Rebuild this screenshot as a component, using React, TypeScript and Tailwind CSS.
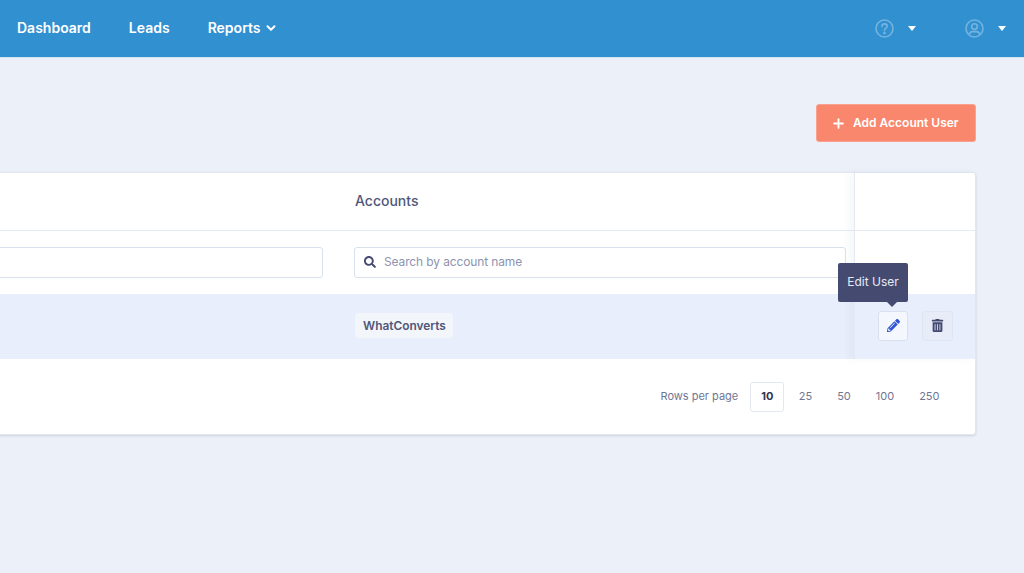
import { ChevronDown, Plus } from 'lucide-react'
import { FaPencilAlt, FaTrashAlt, FaSearch } from 'react-icons/fa'

const rowOptions = ['25', '50', '100', '250']

function Caret() {
  return <span className="h-0 w-0 border-x-[4px] border-t-[5px] border-x-transparent border-t-white" />
}

function HelpIcon() {
  return (
    <svg width="19" height="19" viewBox="0 0 19 19" fill="none" stroke="#74b3e0" strokeWidth="1.6">
      <circle cx="9.5" cy="9.5" r="8.5" />
      <path d="M6.9 7.4c0-1.5 1.2-2.5 2.7-2.5s2.6 1 2.6 2.3c0 2-2.7 2-2.7 4" strokeLinecap="round" />
      <circle cx="9.5" cy="14" r="0.6" fill="#74b3e0" />
    </svg>
  )
}

function UserIcon() {
  return (
    <svg width="19" height="19" viewBox="0 0 19 19" fill="none" stroke="#74b3e0" strokeWidth="1.6">
      <circle cx="9.5" cy="9.5" r="8.5" />
      <circle cx="9.5" cy="7.6" r="2.8" />
      <path d="M4.2 15.6c.5-2 1.8-3 3.3-3h4c1.5 0 2.800 1 3.300 3" />
    </svg>
  )
}

function Navbar() {
  return (
    <header className="flex h-[58px] shrink-0 items-center justify-between border-b border-[#d5e2ef] bg-[#3190d0] pl-[17px] pr-[18px]">
      <nav className="mb-[2px] flex items-center gap-[38px] text-[14px] font-semibold text-white">
        <span>Dashboard</span>
        <span>Leads</span>
        <span className="flex items-center gap-[4px]">
          Reports
          <ChevronDown className="mt-[1px] h-[14px] w-[14px]" strokeWidth={3.4} />
        </span>
      </nav>
      <div className="mb-[1px] flex items-center">
        <HelpIcon />
        <span className="ml-[14px] flex"><Caret /></span>
        <span className="ml-[49px] flex"><UserIcon /></span>
        <span className="ml-[14px] flex"><Caret /></span>
      </div>
    </header>
  )
}

function SearchBox({ placeholder }: { placeholder?: string }) {
  return (
    <div className="flex h-[31px] items-center rounded-[3px] border border-[#d9e0ee] bg-white pb-[1px] pl-[9px] text-[12px] tracking-[-0.13px] text-[#8d94b0]">
      {placeholder && (
        <>
          <FaSearch className="h-[12px] w-[12px] text-[#454b70]" />
          <span className="ml-[8px]">{placeholder}</span>
        </>
      )}
    </div>
  )
}

function UsersTable() {
  return (
    <div className="-ml-[20px] mt-[30px] flex h-[263px] w-[996px] flex-col rounded-[3px] border border-[#e1e6f0] bg-white shadow-sm">
      <div className="flex">
        <div className="flex min-w-0 flex-1 flex-col">
          <div className="flex h-[58px] items-center border-b border-[#e6eaf3] pb-[3px] pl-[374px]">
            <div className="text-[14px] font-medium text-[#50567a]">Accounts</div>
          </div>
          <div className="flex h-[63px] items-center pr-[8px]">
            <div className="w-[342px]"><SearchBox /></div>
            <div className="ml-[31px] flex-1"><SearchBox placeholder="Search by account name" /></div>
          </div>
          <div className="flex h-[65px] items-center bg-[#e8eefb] pb-[2px] pl-[374px]">
            <span className="rounded-[3px] bg-[#f2f5f9] py-[4px] pl-[8px] pr-[7px] text-[11.9px] font-semibold text-[#50567a]">WhatConverts</span>
          </div>
        </div>
        <div className="relative flex w-[121px] shrink-0 flex-col border-l border-[#e6e9f2] shadow-[-5px_0_7px_rgba(80,90,130,0.05)]">
          <div className="h-[58px] border-b border-[#e6eaf3]" />
          <div className="h-[63px]" />
          <div className="flex h-[65px] items-center gap-[14px] bg-[#e8eefb] pb-[2px] pl-[23px]">
            <div className="relative flex h-[30px] w-[30px] items-center justify-center rounded-[3px] border border-[#d9e0ee] bg-[#f4f7fe]">
              <FaPencilAlt className="h-[13px] w-[13px] text-[#2f55d4]" />
              <div className="absolute bottom-[38px] right-[-1px] flex h-[39px] w-[70px] items-center justify-center whitespace-nowrap rounded-[2px] bg-[#454b70] text-[12px] text-[#e8eaf3]">
                Edit User
                <span className="absolute -bottom-[5px] right-[11px] h-0 w-0 border-x-[5px] border-t-[5px] border-x-transparent border-t-[#454b70]" />
              </div>
            </div>
            <div className="flex h-[30px] w-[31px] items-center justify-center rounded-[3px] border border-[#e0e5f2] bg-[#e8ecf9]">
              <FaTrashAlt className="h-[13px] w-[13px] text-[#454b70]" />
            </div>
          </div>
        </div>
      </div>
      <div className="flex flex-1 items-center justify-end pr-[23px]">
        <Pagination />
      </div>
    </div>
  )
}

function Pagination() {
  return (
    <div className="flex items-center text-[11px] text-[#6f7693]">
      <span className="mr-[12px]">Rows per page</span>
      <span className="mr-[2px] flex h-[30px] w-[34px] items-center justify-center rounded-[3px] border border-[#e3e7f2] font-bold text-[#2f3452]">10</span>
      {rowOptions.map((opt) => (
        <span key={opt} className="flex h-[30px] items-center justify-center px-[12.5px]">{opt}</span>
      ))}
    </div>
  )
}

export default function App() {
  return (
    <div className="flex h-[573px] w-[1024px] flex-col overflow-hidden bg-[#ecf0f8] font-['Inter',sans-serif]">
      <Navbar />
      <main className="flex-1 pt-[46px]">
        <div className="flex justify-end pr-[48px]">
          <button className="flex h-[38px] w-[160px] items-center gap-[7px] rounded-[3px] border border-[#f9a18c] bg-[#f8876d] pl-[14px] text-[12px] font-semibold text-white">
            <Plus className="h-[15px] w-[15px]" strokeWidth={3} />
            Add Account User
          </button>
        </div>
        <UsersTable />
      </main>
    </div>
  )
}
